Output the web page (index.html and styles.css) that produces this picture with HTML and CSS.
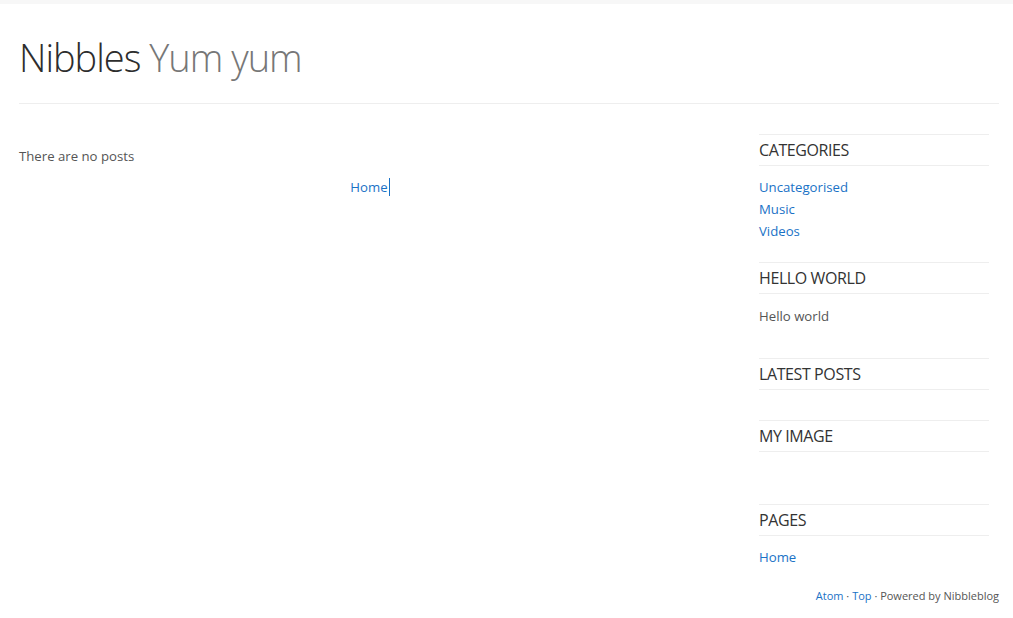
FILE: index.html
```html
<!DOCTYPE html>
<html>
<head>
<meta charset="utf-8">
<title>Nibbles - Yum yum</title>
<link rel="stylesheet" href="styles.css">
</head>
<body>
<div class="topbar"></div>
<div class="container">
  <header class="header">
    <h1 class="site-title">Nibbles <span class="slogan">Yum yum</span></h1>
  </header>
  <div class="columns">
    <main class="main">
      <p class="no-posts">There are no posts</p>
      <div class="pager"><a class="pager-link" href="#">Home</a></div>
    </main>
    <aside class="sidebar">
      <section class="widget">
        <h3 class="widget-title">Categories</h3>
        <ul class="widget-list">
          <li><a href="#">Uncategorised</a></li>
          <li><a href="#">Music</a></li>
          <li><a href="#">Videos</a></li>
        </ul>
      </section>
      <section class="widget">
        <h3 class="widget-title">Hello world</h3>
        <p class="widget-text">Hello world</p>
      </section>
      <section class="widget">
        <h3 class="widget-title">Latest posts</h3>
        <ul class="widget-list"></ul>
      </section>
      <section class="widget">
        <h3 class="widget-title">My image</h3>
        <div class="widget-image"></div>
      </section>
      <section class="widget">
        <h3 class="widget-title">Pages</h3>
        <ul class="widget-list">
          <li><a href="#">Home</a></li>
        </ul>
      </section>
    </aside>
  </div>
  <footer class="footer">
    <a href="#">Atom</a> · <a href="#">Top</a> · Powered by Nibbleblog
  </footer>
</div>
</body>
</html>
```

FILE: styles.css
```css
html, body {
  margin: 0;
  padding: 0;
  background: #fff;
}
body {
  font-family: "Open Sans", "Liberation Sans", sans-serif;
  font-size: 13.2px;
  color: #555;
}
a {
  color: #1a72c6;
  text-decoration: none;
}
.topbar {
  height: 4px;
  background: #f7f7f7;
}
.container {
  width: 980px;
  margin-left: 19px;
}
.header {
  padding-top: 27px;
  padding-bottom: 20px;
  border-bottom: 1px solid #eee;
}
.site-title {
  margin: 0;
  font-size: 38px;
  font-weight: 300;
  letter-spacing: -1px;
  line-height: 52px;
  color: #2d2d2d;
}
.slogan {
  color: #777;
}
.columns {
  display: flex;
  align-items: flex-start;
}
.main {
  width: 702px;
  padding-top: 42px;
}
.no-posts {
  margin: 0;
  line-height: 20px;
}
.pager {
  text-align: center;
  margin-top: 11px;
  line-height: 20px;
}
.pager-link {
  border-right: 1px solid #1a72c6;
  padding-right: 1px;
}
.sidebar {
  width: 230px;
  margin-left: 38px;
  padding-top: 30px;
}
.widget {
  padding-bottom: 20px;
}
.widget-title {
  margin: 0;
  font-size: 16px;
  font-weight: 400;
  letter-spacing: -0.4px;
  line-height: 20px;
  padding: 5px 0;
  text-transform: uppercase;
  color: #333;
  border-top: 1px solid #eee;
  border-bottom: 1px solid #eee;
}
.widget-list {
  list-style: none;
  margin: 10px 0 0;
  padding: 0;
  line-height: 22px;
}
.widget-text {
  margin: 11px 0 0;
  padding-bottom: 11px;
  line-height: 22px;
}
.widget-image {
  margin-top: 10px;
  height: 22px;
}
.footer {
  text-align: right;
  font-size: 11px;
  line-height: 16px;
  color: #555;
}
```
